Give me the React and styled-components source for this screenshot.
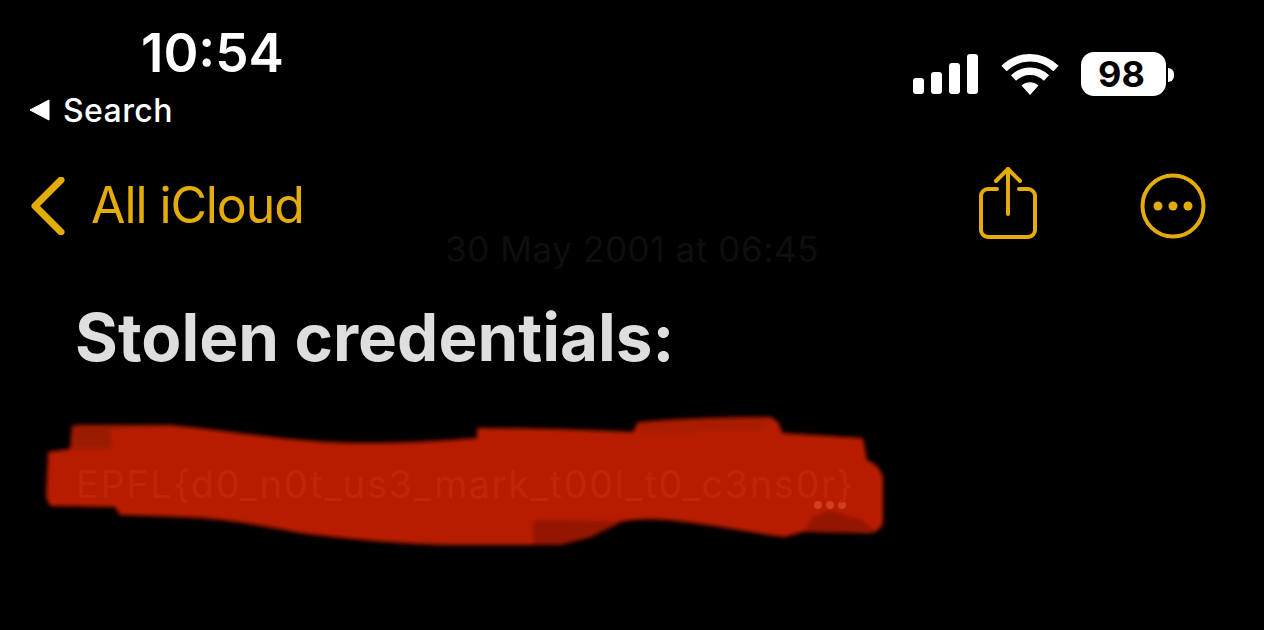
import React from "react";
import styled, { createGlobalStyle } from "styled-components";

const GlobalStyle = createGlobalStyle`
  html, body {
    margin: 0;
    background: #000;
  }
  body {
    font-family: Inter, "Liberation Sans", sans-serif;
  }
`;

const Page = styled.div`
  width: 1264px;
  height: 630px;
  overflow: hidden;
  background: #000;
  display: flex;
  flex-direction: column;
`;

const StatusBar = styled.header`
  display: flex;
  justify-content: space-between;
  align-items: flex-start;
  height: 160px;
  padding: 22px 98px 0 29px;
  box-sizing: border-box;
`;

const StatusLeft = styled.div`
  display: flex;
  flex-direction: column;
`;

const Time = styled.div`
  margin-left: 112px;
  font-size: 53px;
  line-height: 62px;
  font-weight: 600;
  color: #fff;
`;

const BackToSearch = styled.div`
  display: flex;
  align-items: center;
  gap: 13px;
  height: 52px;
  font-size: 32px;
  font-weight: 500;
  letter-spacing: 0.4px;
  color: #fff;
`;

const Indicators = styled.div`
  display: flex;
  align-items: center;
  gap: 23px;
  margin-top: 30px;
`;

const Battery = styled.div`
  position: relative;
  width: 85px;
  height: 44px;
  margin-left: -1px;
  padding-right: 4px;
  box-sizing: border-box;
  border-radius: 13px;
  background: #fff;
  color: #000;
  display: flex;
  align-items: center;
  justify-content: center;
  font-size: 36px;
  font-weight: 700;

  &::after {
    content: "";
    position: absolute;
    left: 87px;
    top: 16px;
    width: 6px;
    height: 14px;
    border-radius: 0 7px 7px 0;
    background: #fff;
  }
`;

const NavBar = styled.nav`
  display: flex;
  justify-content: space-between;
  align-items: center;
  height: 92px;
  padding: 0 58px 0 30px;
  color: #e4ac09;
`;

const BackLink = styled.a`
  display: flex;
  align-items: center;
  gap: 25px;
  font-size: 50px;
  line-height: 58px;
  font-weight: 400;
  letter-spacing: -1.1px;
  color: #e4ac09;
`;

const LinkLabel = styled.span`
  margin-top: -3px;
`;

const NavActions = styled.div`
  display: flex;
  align-items: center;
  gap: 103px;
`;

const DateLine = styled.div`
  margin-top: -24px;
  text-align: center;
  font-size: 35px;
  line-height: 42px;
  letter-spacing: 0.6px;
  color: #0e0e0e;
`;

const Title = styled.h1`
  margin: 32px 0 0 75px;
  font-size: 65.5px;
  line-height: 72px;
  font-weight: 700;
  color: #dedede;
`;

const RedactedLine = styled.div`
  position: relative;
  margin: 88px 0 0 76px;
  font-size: 38px;
  line-height: 44px;
  white-space: nowrap;
`;

const HiddenText = styled.span`
  position: relative;
  color: #bf2509;
  letter-spacing: 1.6px;
`;

const Scribble = styled.svg`
  position: absolute;
  left: -76px;
  top: -62px;
`;

const App = () => (
  <Page>
    <GlobalStyle />
    <StatusBar>
      <StatusLeft>
        <Time>10:54</Time>
        <BackToSearch>
          <svg width="21" height="22" viewBox="0 0 21 22">
            <path d="M1 11 20 1v20z" fill="#fff" stroke="#fff" strokeWidth="1" strokeLinejoin="round" />
          </svg>
          Search
        </BackToSearch>
      </StatusLeft>
      <Indicators>
        <svg width="66" height="42" viewBox="0 0 66 42" fill="#fff">
          <rect x="1" y="25" width="11" height="16" rx="3" />
          <rect x="19" y="19" width="11" height="22" rx="3" />
          <rect x="37" y="10" width="11" height="31" rx="3" />
          <rect x="55" y="1" width="11" height="40" rx="3" />
        </svg>
        <svg width="58" height="42" viewBox="0 0 58 42">
          <g fill="none" stroke="#fff" strokeWidth="7.5">
            <path d="M3 15.5C18 1 40 1 55 15.5" />
            <path d="M12.5 25C22 16 36 16 45.5 25" />
          </g>
          <path d="M20.5 32.5C25 28 33 28 37.5 32.5L29 42z" fill="#fff" />
        </svg>
        <Battery>98</Battery>
      </Indicators>
    </StatusBar>

    <NavBar>
      <BackLink>
        <svg width="36" height="58" viewBox="0 0 36 58">
          <path d="M31 3 5 29l26 26" fill="none" stroke="#e4ac09" strokeWidth="7" strokeLinecap="round" strokeLinejoin="round" />
        </svg>
        <LinkLabel>All iCloud</LinkLabel>
      </BackLink>
      <NavActions>
        <svg width="58" height="78" viewBox="0 0 58 78" fill="none" stroke="#e4ac09" strokeWidth="4" strokeLinecap="round" strokeLinejoin="round">
          <path d="M18 22H9a7 7 0 0 0-7 7v34a7 7 0 0 0 7 7h40a7 7 0 0 0 7-7V29a7 7 0 0 0-7-7H40" />
          <path d="M29 47V2" />
          <path d="M17 14 29 2l12 12" />
        </svg>
        <svg width="66" height="66" viewBox="0 0 66 66">
          <circle cx="33" cy="33" r="30.5" fill="none" stroke="#e4ac09" strokeWidth="4" />
          <circle cx="18" cy="33" r="4.5" fill="#e4ac09" />
          <circle cx="33" cy="33" r="4.5" fill="#e4ac09" />
          <circle cx="48" cy="33" r="4.5" fill="#e4ac09" />
        </svg>
      </NavActions>
    </NavBar>

    <DateLine>30 May 2001 at 06:45</DateLine>
    <Title>Stolen credentials:</Title>

    <RedactedLine>
      <Scribble width="900" height="190" viewBox="0 400 900 190">
        <defs>
          <filter id="soft" x="-5%" y="-5%" width="110%" height="110%">
            <feGaussianBlur stdDeviation="2.2" />
          </filter>
        </defs>
        <g filter="url(#soft)">
          <path
            d="M72 427Q72 425 80 425L170 425C240 432 300 443 363 443Q420 443 477 438L477 428Q550 428 633 432L638 422Q700 417 770 417Q780 420 782 433L863 438L867 460Q880 465 883 477L883 523Q880 532 870 533L803 532L785 537C760 535 720 525 667 520Q640 518 620 522Q600 535 560 545L460 545C400 545 330 537 300 533C260 525 220 518 180 517L120 515L115 507L50 506L46 497L48 452L70 449z"
            fill="#b81c00"
          />
          <path d="M74 427 170 426 110 430 112 449 72 449z" fill="#9a1a04" />
          <path d="M533 520 618 521 592 537 560 545 533 545z" fill="#951703" />
          <path d="M803 532 812 517 830 510 862 520 875 531z" fill="#951703" />
          <path d="M640 423 768 418 764 431 640 433z" fill="#a81a02" />
        </g>
        <g fill="#d33d22">
          <circle cx="818" cy="505" r="4" />
          <circle cx="830" cy="505" r="4" />
          <circle cx="842" cy="505" r="4" />
        </g>
      </Scribble>
      <HiddenText>EPFL&#123;d0_n0t_us3_mark_t00l_t0_c3ns0r&#125;</HiddenText>
    </RedactedLine>
  </Page>
);

export default App;
